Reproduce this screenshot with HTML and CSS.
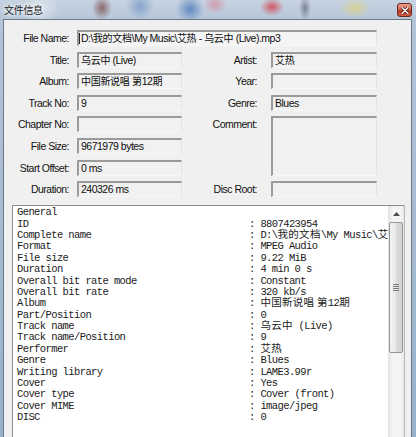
FILE: index.html
```html
<!DOCTYPE html>
<html lang="zh">
<head>
<meta charset="utf-8">
<title>文件信息</title>
<link rel="stylesheet" href="styles.css">
</head>
<body>
<div class="titlebar">
  <span class="title">文件信息</span>
  <span class="close"><svg width="8" height="7" viewBox="0 0 8 7"><path d="M1 0.5 L7 6.5 M7 0.5 L1 6.5" stroke="#3a1a14" stroke-width="2.6" stroke-linecap="round"/><path d="M1 0.5 L7 6.5 M7 0.5 L1 6.5" stroke="#ffffff" stroke-width="1.3" stroke-linecap="round"/></svg></span>
</div>
<div class="frame">
  <div class="client">
    <div class="form">
      <span class="lbl">File Name:</span>
      <div class="field wide"><span class="caret"></span>D:\<span class="fc">我的文档</span>\My Music\<span class="fc">艾热</span> - <span class="fc">乌云中</span> (Live).mp3</div>

      <span class="lbl">Title:</span>
      <div class="field"><span class="fc">乌云中</span> (Live)</div>
      <span class="lbl rl">Artist:</span>
      <div class="field rf"><span class="fc">艾热</span></div>

      <span class="lbl">Album:</span>
      <div class="field"><span class="fc">中国新说唱 第</span>12<span class="fc">期</span></div>
      <span class="lbl rl">Year:</span>
      <div class="field rf"></div>

      <span class="lbl">Track No:</span>
      <div class="field">9</div>
      <span class="lbl rl">Genre:</span>
      <div class="field rf">Blues</div>

      <span class="lbl">Chapter No:</span>
      <div class="field"></div>
      <span class="lbl rl top">Comment:</span>
      <div class="field rf comment"></div>

      <span class="lbl">File Size:</span>
      <div class="field">9671979 bytes</div>

      <span class="lbl">Start Offset:</span>
      <div class="field">0 ms</div>

      <span class="lbl">Duration:</span>
      <div class="field">240326 ms</div>
      <span class="lbl rl">Disc Root:</span>
      <div class="field rf"></div>
    </div>

    <div class="memo">
      <div class="memo-text">
        <div class="line"><span class="k">General</span></div>
        <div class="line"><span class="k">ID</span><span class="v">: 8807423954</span></div>
        <div class="line"><span class="k">Complete name</span><span class="v">: D:\<span class="c">我的文档</span>\My Music\<span class="c">艾热</span> - <span class="c">乌云中</span> (Live).mp3</span></div>
        <div class="line"><span class="k">Format</span><span class="v">: MPEG Audio</span></div>
        <div class="line"><span class="k">File size</span><span class="v">: 9.22 MiB</span></div>
        <div class="line"><span class="k">Duration</span><span class="v">: 4 min 0 s</span></div>
        <div class="line"><span class="k">Overall bit rate mode</span><span class="v">: Constant</span></div>
        <div class="line"><span class="k">Overall bit rate</span><span class="v">: 320 kb/s</span></div>
        <div class="line"><span class="k">Album</span><span class="v">: <span class="c">中国新说唱 第</span>12<span class="c">期</span></span></div>
        <div class="line"><span class="k">Part/Position</span><span class="v">: 0</span></div>
        <div class="line"><span class="k">Track name</span><span class="v">: <span class="c">乌云中</span> (Live)</span></div>
        <div class="line"><span class="k">Track name/Position</span><span class="v">: 9</span></div>
        <div class="line"><span class="k">Performer</span><span class="v">: <span class="c">艾热</span></span></div>
        <div class="line"><span class="k">Genre</span><span class="v">: Blues</span></div>
        <div class="line"><span class="k">Writing library</span><span class="v">: LAME3.99r</span></div>
        <div class="line"><span class="k">Cover</span><span class="v">: Yes</span></div>
        <div class="line"><span class="k">Cover type</span><span class="v">: Cover (front)</span></div>
        <div class="line"><span class="k">Cover MIME</span><span class="v">: image/jpeg</span></div>
        <div class="line"><span class="k">DISC</span><span class="v">: 0</span></div>
      </div>
      <div class="scrollbar">
        <div class="sb-arrow"><svg width="7" height="4" viewBox="0 0 7 4"><path d="M0 4 L3.5 0 L7 4 Z" fill="#4d4d4d"/></svg></div>
        <div class="sb-thumb"><span class="grip"></span></div>
        <div class="sb-track"></div>
      </div>
    </div>
  </div>
</div>
</body>
</html>
```

FILE: styles.css
```css
html, body {
  margin: 0;
  padding: 0;
}

body {
  width: 416px;
  height: 437px;
  overflow: hidden;
  background: #a9bcd2;
  font-family: "Liberation Sans", "Noto Sans CJK SC", sans-serif;
  font-size: 10.5px;
  letter-spacing: -0.5px;
  color: #111;
}

.titlebar {
  height: 19px;
  display: flex;
  align-items: center;
  justify-content: space-between;
  padding: 0 4px 0 4px;
  box-sizing: border-box;
  background:
    radial-gradient(ellipse 10px 12px at 102px 8px, rgba(120, 70, 70, 0.75), rgba(120, 70, 70, 0) 100%),
    radial-gradient(ellipse 14px 14px at 140px 6px, rgba(90, 130, 190, 0.55), rgba(90, 130, 190, 0) 100%),
    radial-gradient(ellipse 14px 14px at 190px 9px, rgba(60, 110, 180, 0.7), rgba(60, 110, 180, 0) 100%),
    radial-gradient(ellipse 12px 10px at 215px 4px, rgba(220, 120, 140, 0.6), rgba(220, 120, 140, 0) 100%),
    radial-gradient(ellipse 12px 9px at 272px 7px, rgba(210, 60, 70, 0.8), rgba(210, 60, 70, 0) 100%),
    radial-gradient(ellipse 6px 12px at 305px 8px, rgba(70, 70, 90, 0.55), rgba(70, 70, 90, 0) 100%),
    radial-gradient(ellipse 16px 10px at 355px 8px, rgba(225, 210, 120, 0.7), rgba(225, 210, 120, 0) 100%),
    radial-gradient(ellipse 20px 16px at 40px 8px, rgba(225, 230, 236, 0.9), rgba(225, 230, 236, 0) 100%),
    linear-gradient(to bottom, #c6d3e1, #b6c7da);
}

.title {
  font-family: "Noto Sans CJK SC", sans-serif;
  font-size: 10px;
  letter-spacing: -0.3px;
  color: #1a1a1a;
  text-shadow: 0 0 4px #ffffff, 0 0 6px #ffffff;
  line-height: 12px;
}

.close {
  width: 15px;
  height: 14px;
  margin-top: 1px;
  box-sizing: border-box;
  border: 1px solid #6a2a22;
  border-radius: 3px;
  background: linear-gradient(to bottom, #e8a08e 0%, #d2634c 45%, #b53a22 55%, #cf5a3c 100%);
  display: flex;
  align-items: center;
  justify-content: center;
}

.frame {
  padding: 0 4px 0 3px;
  background: linear-gradient(to bottom, #b3c4d8, #98b0cc);
}

.client {
  height: 418px;
  box-sizing: border-box;
  border: 1px solid #6c7986;
  border-bottom: none;
  background: #f0f0f0;
}

.form {
  display: grid;
  grid-template-columns: 65px 105px 73px 106px;
  grid-auto-rows: 16px;
  column-gap: 8px;
  row-gap: 5.6px;
  padding-top: 10px;
}

.lbl {
  grid-column: 1;
  justify-self: end;
  align-self: center;
  white-space: nowrap;
  line-height: 12px;
}

.lbl.rl {
  grid-column: 3;
  padding-right: 6px;
}

.lbl.top {
  align-self: start;
  margin-top: 2px;
}

.field {
  grid-column: 2;
  box-sizing: border-box;
  height: 16px;
  border-style: solid;
  border-width: 2px 1px 1px 2px;
  border-color: #9a9a9a #e4e4e4 #f7f7f7 #9a9a9a;
  background: #f1f1f1;
  padding: 0 0 0 2px;
  line-height: 13px;
  white-space: nowrap;
  overflow: hidden;
  color: #0d0d0d;
}

.fc {
  font-size: 10px;
  letter-spacing: -0.3px;
  line-height: 0;
}

.field.rf {
  grid-column: 4;
}

.field.wide {
  grid-column: 2 / 5;
  background: #f4f4f4;
  padding-left: 0;
}

.field.comment {
  grid-row: span 3;
  height: auto;
}

.caret {
  display: inline-block;
  width: 1px;
  height: 11px;
  background: #222;
  vertical-align: -2px;
  margin-right: 1px;
}

.memo {
  margin: 8px 6px 0 8px;
  height: 260px;
  border: 1px solid #8a8d92;
  border-right-color: #b5b8bc;
  background: #ffffff;
  display: flex;
}

.memo-text {
  flex: 1;
  min-width: 0;
  overflow: hidden;
  padding: 1px 0 0 4px;
  font-family: "Liberation Mono", "DejaVu Sans Mono", "Noto Sans CJK SC", monospace;
  font-size: 10.5px;
  letter-spacing: -0.6px;
  line-height: 11.4px;
  color: #1b1b1b;
}

.line {
  height: 11.4px;
  white-space: nowrap;
}

.k {
  display: inline-block;
  width: 232px;
}

.c {
  font-family: "Noto Sans CJK SC", sans-serif;
  font-size: 10.5px;
  line-height: 0;
  letter-spacing: 0.3px;
}

.scrollbar {
  width: 16px;
  flex: none;
  display: flex;
  flex-direction: column;
  background: linear-gradient(to right, #e3e3e3, #f4f4f4 30%, #f4f4f4 80%, #e8e8e8);
}

.sb-arrow {
  height: 16px;
  display: flex;
  align-items: center;
  justify-content: center;
}

.sb-thumb {
  height: 131px;
  margin: 0 1px;
  box-sizing: border-box;
  border: 1px solid #959595;
  border-radius: 2px;
  background: linear-gradient(to right, #f3f3f3, #e9e9e9 45%, #d9d9d9 55%, #d4d4d4);
  display: flex;
  align-items: center;
  justify-content: center;
}

.grip {
  width: 6px;
  height: 7px;
  background: repeating-linear-gradient(to bottom, #7c7c7c 0, #7c7c7c 1px, transparent 1px, transparent 2px);
}

.sb-track {
  flex: 1;
}
```
